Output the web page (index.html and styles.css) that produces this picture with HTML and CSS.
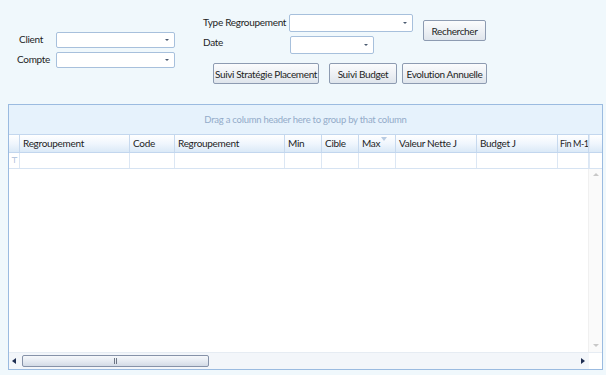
FILE: index.html
```html
<!DOCTYPE html>
<html lang="fr">
<head>
  <meta charset="UTF-8">
  <title>Suivi Placement</title>
  <link rel="stylesheet" href="styles.css">
</head>
<body>
  <div class="top">
    <div class="account">
      <div class="row">
        <span class="label client">Client</span>
        <div class="combo wide"><span class="arrow"></span></div>
      </div>
      <div class="row">
        <span class="label">Compte</span>
        <div class="combo wide"><span class="arrow"></span></div>
      </div>
    </div>

    <div class="filters">
      <div class="filter-head">
        <div class="filter-fields">
          <div class="row">
            <span class="label type">Type Regroupement</span>
            <div class="combo type-combo"><span class="arrow"></span></div>
          </div>
          <div class="row">
            <span class="label type date">Date</span>
            <div class="combo date-combo"><span class="arrow"></span></div>
          </div>
        </div>
        <button class="btn search">Rechercher</button>
      </div>
      <div class="actions">
        <button class="btn strat">Suivi Stratégie Placement</button>
        <button class="btn budget">Suivi Budget</button>
        <button class="btn evol">Evolution Annuelle</button>
      </div>
    </div>
  </div>

  <div class="grid">
    <div class="group-panel">Drag a column header here to group by that column</div>
    <div class="header">
      <div class="cell ind"></div>
      <div class="cell" style="width: 110px">Regroupement</div>
      <div class="cell" style="width: 45px">Code</div>
      <div class="cell" style="width: 110px">Regroupement</div>
      <div class="cell" style="width: 37px">Min</div>
      <div class="cell" style="width: 37px">Cible</div>
      <div class="cell max" style="width: 37px">Max<span class="funnel"></span></div>
      <div class="cell" style="width: 81px">Valeur Nette J</div>
      <div class="cell" style="width: 81px">Budget J</div>
      <div class="cell last">Fin M-1</div>
      <div class="cell corner"></div>
    </div>
    <div class="filter-row">
      <div class="cell ind">&#x22A4;</div>
      <div class="cell" style="width: 110px"></div>
      <div class="cell" style="width: 45px"></div>
      <div class="cell" style="width: 110px"></div>
      <div class="cell" style="width: 37px"></div>
      <div class="cell" style="width: 37px"></div>
      <div class="cell" style="width: 37px"></div>
      <div class="cell" style="width: 81px"></div>
      <div class="cell" style="width: 81px"></div>
      <div class="cell last"></div>
      <div class="cell corner"></div>
    </div>
    <div class="body">
      <div class="rows"></div>
      <div class="vscroll">
        <span class="tri up"></span>
        <span class="tri down"></span>
      </div>
    </div>
    <div class="hscroll">
      <span class="tri left"></span>
      <div class="track">
        <div class="thumb"><span class="grip"></span></div>
      </div>
      <span class="tri right"></span>
      <div class="hcorner"></div>
    </div>
  </div>
</body>
</html>
```

FILE: styles.css
```css
body {
  margin: 0;
  padding: 0;
  background-color: #f0f8fc;
  font-family: "Lato", "Liberation Sans", sans-serif;
  font-size: 10px;
  letter-spacing: -0.3px;
  color: #1e1e1e;
  width: 606px;
  height: 375px;
  overflow: hidden;
  white-space: nowrap;
}

.top {
  display: flex;
  height: 104px;
}

.account {
  margin-top: 32px;
  margin-left: 17px;
  display: flex;
  flex-direction: column;
  gap: 4px;
}

.row {
  display: flex;
  align-items: center;
}

.label {
  width: 39px;
  margin-top: -3px;
}

.label.client {
  padding-left: 2px;
  width: 37px;
}

.label.type {
  width: 86px;
}

.label.date {
  margin-top: -7px;
}

.combo {
  position: relative;
  box-sizing: border-box;
  height: 16px;
  background-color: #fff;
  border: 1px solid #a7c0dc;
  border-radius: 2px;
}

.combo.wide {
  width: 119px;
}

.combo .arrow {
  position: absolute;
  right: 5px;
  top: 6px;
  border-left: 2px solid transparent;
  border-right: 2px solid transparent;
  border-top: 2px solid #4a5a70;
}

.combo.type-combo {
  width: 124px;
  height: 18px;
}

.combo.date-combo {
  width: 84px;
  height: 18px;
  margin-left: 1px;
}

.combo.type-combo .arrow,
.combo.date-combo .arrow {
  top: 7px;
}

.filters {
  margin-left: 28px;
  margin-top: 14px;
}

.filter-head {
  display: flex;
}

.filter-fields {
  display: flex;
  flex-direction: column;
  gap: 4px;
}

.btn {
  box-sizing: border-box;
  height: 21px;
  padding: 0;
  font-family: inherit;
  font-size: 10px;
  letter-spacing: -0.35px;
  color: #1e1e1e;
  white-space: nowrap;
  background: linear-gradient(#fbfcfd, #eef1f5 50%, #dfe5ec);
  border: 1px solid #8d9bb1;
  border-radius: 2px;
}

.btn.search {
  width: 63px;
  margin-left: 10px;
  margin-top: 6px;
}

.actions {
  display: flex;
  margin-top: 9px;
  margin-left: 10px;
}

.btn.strat {
  width: 106px;
}

.btn.budget {
  width: 68px;
  margin-left: 10px;
}

.btn.evol {
  width: 85px;
  margin-left: 5px;
}

.grid {
  box-sizing: border-box;
  margin-left: 8px;
  width: 595px;
  height: 266px;
  background-color: #fff;
  border: 1px solid #9bbbe0;
  display: flex;
  flex-direction: column;
}

.group-panel {
  height: 29px;
  line-height: 30px;
  text-align: center;
  color: #93abc9;
  font-size: 9.5px;
  letter-spacing: -0.25px;
  background-color: #e6f2fc;
  border-bottom: 1px solid #c3d7ee;
}

.header,
.filter-row {
  display: flex;
}

.header {
  height: 18px;
  background: linear-gradient(#ffffff, #f0f6fd 50%, #dbe9f7);
  border-bottom: 1px solid #c2d6ee;
  box-sizing: border-box;
}

.header .cell {
  line-height: 17px;
  padding-left: 3px;
  border-right: 1px solid #c7d9ee;
  box-sizing: border-box;
  overflow: hidden;
}

.cell.ind {
  width: 11px;
  padding: 0;
}

.cell.last {
  flex: 1;
}

.header .cell.last {
  padding-left: 2px;
  font-size: 9px;
  letter-spacing: -0.4px;
}

.header .cell.corner,
.filter-row .cell.corner {
  width: 13px;
  flex: none;
  padding: 0;
  border-right: none;
  border-left: 1px solid #dfe9f5;
}

.cell.max {
  position: relative;
}

.funnel {
  position: absolute;
  top: 2px;
  right: 8px;
  border-left: 3px solid transparent;
  border-right: 3px solid transparent;
  border-top: 4px solid #b8cbe2;
}

.filter-row {
  height: 15px;
  border-bottom: 1px solid #d6e3f2;
}

.filter-row .cell {
  box-sizing: border-box;
  border-right: 1px solid #dce7f4;
}

.filter-row .cell.ind {
  color: #7c9cc8;
  font-size: 8px;
  line-height: 15px;
  text-align: center;
}

.body {
  flex: 1;
  display: flex;
}

.rows {
  flex: 1;
}

.vscroll {
  position: relative;
  width: 13px;
  border-left: 1px solid #f0f0f0;
  background-color: #fafafa;
}

.tri {
  position: absolute;
  width: 0;
  height: 0;
}

.tri.up {
  top: 4px;
  left: 4px;
  border-left: 3px solid transparent;
  border-right: 3px solid transparent;
  border-bottom: 3px solid #c8c8c8;
}

.tri.down {
  bottom: 5px;
  left: 4px;
  border-left: 3px solid transparent;
  border-right: 3px solid transparent;
  border-top: 3px solid #c8c8c8;
}

.hscroll {
  position: relative;
  height: 16px;
  display: flex;
  align-items: center;
  background-color: #f3f6fa;
  border-top: 1px solid #e6ecf3;
}

.tri.left {
  position: static;
  margin-left: 3px;
  border-top: 3px solid transparent;
  border-bottom: 3px solid transparent;
  border-right: 4px solid #1f2e52;
}

.track {
  flex: 1;
  height: 12px;
  margin-left: 6px;
  margin-right: 6px;
}

.thumb {
  position: relative;
  box-sizing: border-box;
  width: 187px;
  height: 12px;
  border: 1px solid #8692a8;
  border-radius: 2px;
  background: linear-gradient(#f6f8fb, #e6ebf2 50%, #d3dbe6);
}

.grip {
  position: absolute;
  left: 91px;
  top: 2px;
  width: 1px;
  height: 6px;
  border-left: 1px solid #6d7685;
  border-right: 1px solid #6d7685;
}

.tri.right {
  position: static;
  margin-right: 4px;
  border-top: 3px solid transparent;
  border-bottom: 3px solid transparent;
  border-left: 4px solid #1f2e52;
}

.hcorner {
  width: 13px;
  align-self: stretch;
  background-color: #fff;
}
```
